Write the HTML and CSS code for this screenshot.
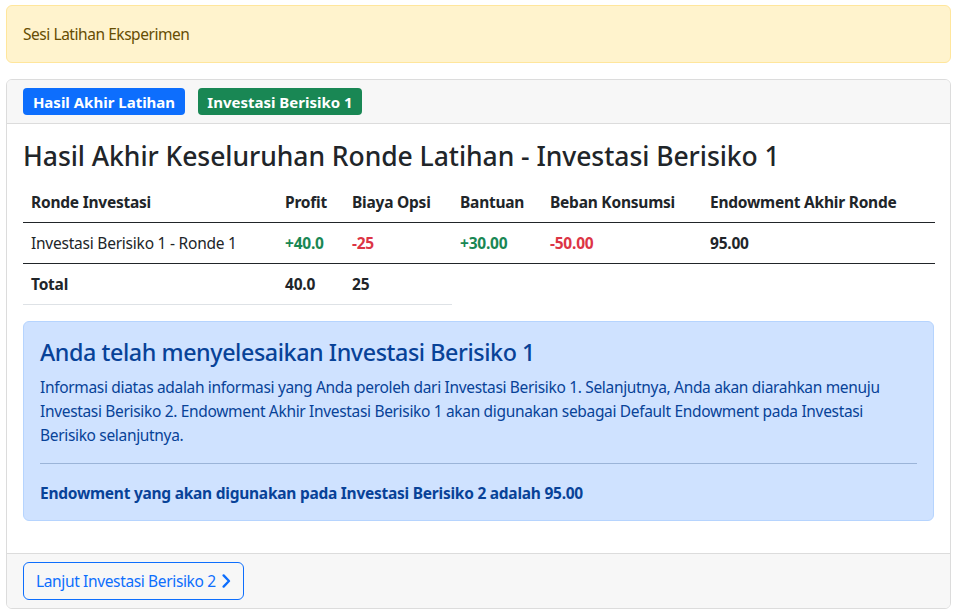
FILE: index.html
```html
<!DOCTYPE html>
<html lang="id">
<head>
<meta charset="utf-8">
<title>Sesi Latihan Eksperimen</title>
<link rel="stylesheet" href="styles.css">
</head>
<body>
<div class="page">
  <div class="alert alert-warning">Sesi Latihan Eksperimen</div>

  <div class="card">
    <div class="card-header">
      <span class="badge badge-blue">Hasil Akhir Latihan</span>
      <span class="badge badge-green">Investasi Berisiko 1</span>
    </div>
    <div class="card-body">
      <h3 class="title">Hasil Akhir Keseluruhan Ronde Latihan - Investasi Berisiko 1</h3>
      <table class="table">
        <colgroup>
          <col class="c1"><col class="c2"><col class="c3"><col class="c4"><col class="c5"><col class="c6">
        </colgroup>
        <thead>
          <tr>
            <th>Ronde Investasi</th>
            <th>Profit</th>
            <th>Biaya Opsi</th>
            <th>Bantuan</th>
            <th>Beban Konsumsi</th>
            <th>Endowment Akhir Ronde</th>
          </tr>
        </thead>
        <tbody>
          <tr>
            <td>Investasi Berisiko 1 - Ronde 1</td>
            <td class="val pos">+40.0</td>
            <td class="val neg">-25</td>
            <td class="val pos">+30.00</td>
            <td class="val neg">-50.00</td>
            <td class="val">95.00</td>
          </tr>
        </tbody>
        <tfoot>
          <tr>
            <td class="val">Total</td>
            <td class="val">40.0</td>
            <td class="val">25</td>
          </tr>
        </tfoot>
      </table>

      <div class="alert alert-info">
        <h4 class="alert-heading">Anda telah menyelesaikan Investasi Berisiko 1</h4>
        <p class="info-text">Informasi diatas adalah informasi yang Anda peroleh dari Investasi Berisiko 1. Selanjutnya, Anda akan diarahkan menuju Investasi Berisiko 2. Endowment Akhir Investasi Berisiko 1 akan digunakan sebagai Default Endowment pada Investasi Berisiko selanjutnya.</p>
        <hr class="divider">
        <p class="info-strong">Endowment yang akan digunakan pada Investasi Berisiko 2 adalah 95.00</p>
      </div>
    </div>
    <div class="card-footer">
      <button class="btn-outline" type="button"><span>Lanjut Investasi Berisiko 2</span><svg class="chev" width="9" height="14" viewBox="0 0 9 14" aria-hidden="true"><polyline points="1.6,1.4 7,7 1.6,12.6" fill="none" stroke="currentColor" stroke-width="2.3" stroke-linecap="round" stroke-linejoin="round"/></svg></button>
    </div>
  </div>
</div>
</body>
</html>
```

FILE: styles.css
```css
* { box-sizing: border-box; }

html, body {
  margin: 0;
  background: #fff;
}

body {
  font-family: "Noto Sans", "Open Sans", "Liberation Sans", sans-serif;
  font-size: 16px;
  line-height: 24px;
  color: #212529;
}

.page {
  padding: 5px 7px 6px 6px;
}

.alert {
  border: 1px solid transparent;
  border-radius: 6px;
  padding: 16px;
  margin-bottom: 16px;
}

.alert-warning {
  background: #fff3cd;
  border-color: #ffe69c;
  color: #664d03;
  font-size: 15.5px;
  letter-spacing: -0.45px;
}

.card {
  border: 1px solid #dcdcdc;
  border-radius: 6px;
  overflow: hidden;
}

.card-header {
  background: #f7f7f7;
  border-bottom: 1px solid #dcdcdc;
  padding: 8px 16px;
  display: flex;
  gap: 13px;
}

.badge {
  display: inline-flex;
  align-items: center;
  justify-content: center;
  height: 27px;
  padding: 0 8px;
  border-radius: 4px;
  color: #fff;
  font-weight: 700;
  font-size: 15px;
  letter-spacing: 0;
}

.badge-blue { background: #0d6efd; width: 162px; }
.badge-green { background: #198754; width: 164px; }

.card-body {
  padding: 16px;
}

.title {
  margin: 0 0 10px;
  font-size: 26.5px;
  line-height: 32px;
  font-weight: 500;
  letter-spacing: -0.05px;
}

.table {
  width: 100%;
  table-layout: fixed;
  border-collapse: collapse;
  margin-bottom: 16px;
}

.c1 { width: 254px; }
.c2 { width: 67px; }
.c3 { width: 108px; }
.c4 { width: 90px; }
.c5 { width: 160px; }
.c6 { width: 233px; }

.table th,
.table td {
  padding: 8px;
  text-align: left;
  white-space: nowrap;
  font-size: 15.5px;
  letter-spacing: -0.23px;
  vertical-align: top;
}

.table th {
  font-weight: 700;
  border-bottom: 1px solid #212529;
}

.table tbody td {
  border-bottom: 1px solid #212529;
  height: 41px;
}

.table tfoot td {
  border-bottom: 1px solid #dee2e6;
}

.val { font-weight: 700; }
.pos { color: #198754; }
.neg { color: #dc3545; }

.alert-info {
  background: #cfe2ff;
  border-color: #b6d4fe;
  color: #084298;
  margin-bottom: 16px;
  padding-bottom: 15px;
}

.alert-heading {
  margin: 0 0 9px;
  font-size: 23.3px;
  line-height: 28px;
  font-weight: 500;
  letter-spacing: -0.43px;
}

.info-text {
  margin: 0 0 16px;
  font-size: 15.5px;
  letter-spacing: -0.33px;
}

.divider {
  margin: 0 0 17px;
  border: 0;
  border-top: 1px solid #9bb4d8;
}

.info-strong {
  margin: 0;
  font-weight: 700;
  font-size: 15.5px;
  letter-spacing: -0.25px;
}

.card-footer {
  background: #f7f7f7;
  border-top: 1px solid #dcdcdc;
  padding: 8px 16px;
}

.btn-outline {
  display: inline-flex;
  align-items: center;
  gap: 6px;
  height: 38px;
  padding: 0 12px;
  border: 1px solid #0d6efd;
  border-radius: 6px;
  background: transparent;
  color: #0d6efd;
  font-family: inherit;
  font-size: 15.5px;
  letter-spacing: -0.36px;
  white-space: nowrap;
  cursor: pointer;
}

.chev { flex: none; }
```
